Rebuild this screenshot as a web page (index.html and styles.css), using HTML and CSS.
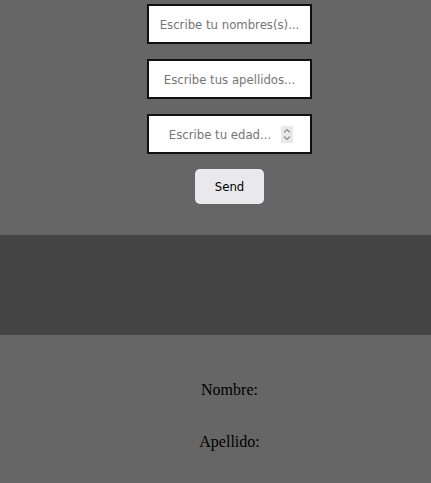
FILE: index.html
```html
<!DOCTYPE html>
<html lang="es">
<head>
<meta charset="utf-8">
<title>Formulario</title>
<link rel="stylesheet" href="styles.css">
</head>
<body>
<form class="form">
  <div class="field">
    <input class="entry" type="text" placeholder="Escribe tu nombres(s)...">
  </div>
  <div class="field">
    <input class="entry" type="text" placeholder="Escribe tus apellidos...">
  </div>
  <div class="field field-number">
    <input class="entry entry-number" type="text" inputmode="numeric" placeholder="Escribe tu edad...">
    <span class="spin" aria-hidden="true">
      <svg width="12" height="17" viewBox="0 0 12 17">
        <rect x="0" y="0" width="12" height="17" fill="#e9e8ed"/>
        <path d="M3 6.5 L6 3.5 L9 6.5" fill="none" stroke="#8a8a8f" stroke-width="1.1"/>
        <path d="M3 10.5 L6 13.5 L9 10.5" fill="none" stroke="#8a8a8f" stroke-width="1.1"/>
      </svg>
    </span>
  </div>
  <button class="send" type="button">Send</button>
</form>
<div class="band"></div>
<section class="results">
  <p class="line">Nombre:</p>
  <p class="line">Apellido:</p>
</section>
</body>
</html>
```
FILE: styles.css
```css
html, body {
  margin: 0;
  padding: 0;
  background: #666666;
}
body {
  font-family: "Liberation Serif", "Times New Roman", serif;
}
.form {
  display: flex;
  flex-direction: column;
  align-items: center;
  gap: 15px;
  padding: 4px 0 0 28px;
  margin: 0 0 31px 0;
}
.field {
  box-sizing: border-box;
  width: 165px;
  height: 40px;
  border: 2px solid #111111;
  background: #ffffff;
  display: flex;
  align-items: center;
}
.entry {
  flex: 1;
  min-width: 0;
  height: 100%;
  box-sizing: border-box;
  border: none;
  background: transparent;
  font-family: "DejaVu Sans Condensed", "DejaVu Sans", Tahoma, sans-serif;
  font-size: 13px;
  text-align: center;
  color: #000;
  padding: 0 4px;
  outline: none;
}
.entry::placeholder {
  color: #757575;
}
.entry-number {
  padding: 0 0 0 10px;
}
.spin {
  display: flex;
  width: 12px;
  height: 17px;
  margin-right: 17px;
  flex: none;
}
.send {
  box-sizing: border-box;
  width: 69px;
  height: 35px;
  border: none;
  border-radius: 5px;
  background: #e9e8ed;
  font-family: "DejaVu Sans Condensed", "DejaVu Sans", Tahoma, sans-serif;
  font-size: 13px;
  color: #000;
  padding: 0;
}
.band {
  height: 100px;
  background: #444444;
}
.results {
  display: flex;
  flex-direction: column;
  align-items: center;
  padding: 46px 0 0 28px;
}
.line {
  margin: 0 0 34px 0;
  font-size: 16px;
  line-height: 18px;
  color: #000;
}
```
